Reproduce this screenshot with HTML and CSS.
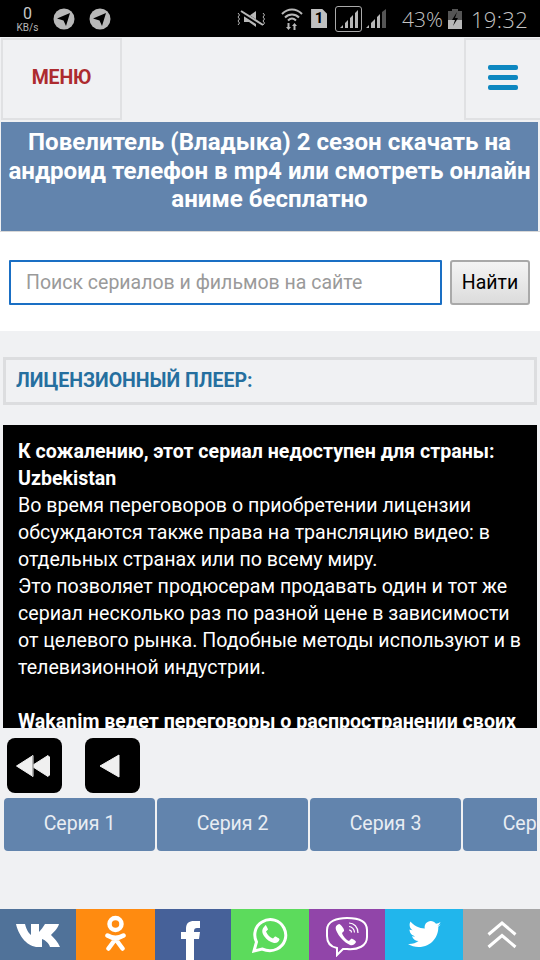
FILE: index.html
```html
<!DOCTYPE html>
<html lang="ru">
<head>
    <meta charset="UTF-8">
    <meta name="viewport" content="width=device-width, initial-scale=1.0">
    <title>Повелитель (Владыка) 2 сезон</title>
    <link rel="stylesheet" href="styles.css">
</head>
<body>
    <div class="status-bar">
        <div class="net-speed"><span class="net-num">0</span><span class="net-unit">KB/s</span></div>
        <svg class="tg" viewBox="0 0 22 22"><circle cx="11" cy="11" r="10.5" fill="#b8b8b8"/><path d="M4 10.5 17 5 13 18 10.5 12.5z" fill="#000"/></svg>
        <svg class="tg" viewBox="0 0 22 22"><circle cx="11" cy="11" r="10.5" fill="#b8b8b8"/><path d="M4 10.5 17 5 13 18 10.5 12.5z" fill="#000"/></svg>
        <div class="status-right">
            <svg class="st-mute" viewBox="0 0 30 18"><path d="M8 6h5l7-5v16l-7-5H8z" fill="#b8b8b8"/><path d="M5 2 27 16" stroke="#000" stroke-width="4"/><path d="M5 1 27 15" stroke="#b8b8b8" stroke-width="2"/><path d="M2 3l1.500 2-1.500 2 1.500 2-1.500 2 1.500 2-1.500 2M27 3l1.500 2-1.500 2 1.500 2-1.500 2 1.500 2-1.500 2" fill="none" stroke="#b8b8b8" stroke-width="1"/></svg>
            <svg class="st-wifi" viewBox="0 0 22 24"><path d="M1 7C7 1 15 1 21 7M4 10.500C8 6.500 14 6.500 18 10.500M7 13.500C9.500 11 12.500 11 15 13.500" fill="none" stroke="#b8b8b8" stroke-width="2"/><path d="M8.500 16v4H7l2.500 3 2.500-3h-1.500v-4zM14.500 23v-4H13l2.500-3 2.500 3h-1.500v4z" fill="#b8b8b8" transform="translate(-2 0)"/></svg>
            <div class="st-sim">1</div>
            <div class="st-signal-box">
                <svg class="st-signal" viewBox="0 0 18 18"><path d="M0 18l3-3v3zM5 18v-5l3-3v8zM10 18V8l3-3v13zM15 18V3l3-3v18z" fill="#b8b8b8"/></svg>
            </div>
            <svg class="st-signal2" viewBox="0 0 20 19"><path d="M0 19l3-3v3zM5 19v-5l4-4v9zM11 19V8l3-3v14z" fill="#b8b8b8"/><path d="M16 19V3l4-3v19z" fill="#555"/></svg>
            <span class="st-batt-text">43%</span>
            <svg class="st-batt" viewBox="0 0 14 20"><path d="M4 0h6v2h4v18H0V2h4z" fill="#555"/><path d="M0 11h14v9H0z" fill="#b8b8b8"/><path d="M9 3 4 11h3l-2 6 5-8H7z" fill="#000"/></svg>
            <span class="st-time">19:32</span>
        </div>
    </div>

    <div class="top-nav">
        <div class="menu-btn">МЕНЮ</div>
        <div class="burger-btn">
            <span class="burger-line"></span>
            <span class="burger-line"></span>
            <span class="burger-line"></span>
        </div>
    </div>

    <h1 class="page-title">Повелитель (Владыка) 2 сезон скачать на андроид телефон в mp4 или смотреть онлайн аниме бесплатно</h1>

    <div class="search-wrap">
        <input class="search-input" type="text" placeholder="Поиск сериалов и фильмов на сайте">
        <button class="search-btn" type="button">Найти</button>
    </div>

    <h2 class="player-head">ЛИЦЕНЗИОННЫЙ ПЛЕЕР:</h2>

    <div class="player-box">
        <strong>К сожалению, этот сериал недоступен для страны: Uzbekistan</strong><br>
        Во время переговоров о приобретении лицензии обсуждаются также права на трансляцию видео: в отдельных странах или по всему миру.<br>
        Это позволяет продюсерам продавать один и тот же сериал несколько раз по разной цене в зависимости от целевого рынка. Подобные методы используют и в телевизионной индустрии.<br>
        <br>
        <strong>Wakanim ведет переговоры о распространении своих</strong>
    </div>

    <div class="arrows">
        <div class="arrow-btn">
            <svg viewBox="0 0 36 24" class="arrow-icon"><path d="M1.500 12 18 1.500v21zM16.500 12 33 1.500 34.500 3v18L33 22.500z" fill="#f0f0f0" stroke="#f0f0f0" stroke-linejoin="round"/><path d="M18 2v20" stroke="#777" stroke-width="1"/></svg>
        </div>
        <div class="arrow-btn">
            <svg viewBox="0 0 22 24" class="arrow-icon-one"><path d="M1 12 20 1v22z" fill="#f0f0f0" stroke="#f0f0f0" stroke-linejoin="round"/></svg>
        </div>
    </div>

    <div class="series-row">
        <div class="series-btn">Серия 1</div>
        <div class="series-btn">Серия 2</div>
        <div class="series-btn">Серия 3</div>
        <div class="series-btn">Серия 4</div>
    </div>

    <div class="share-bar">
        <div class="share-item vk">
            <svg viewBox="0 0 44 24" class="ic-vk"><path d="M0 1h9c1 4 3 9 6 11V1h8v8c2-2 4-5 6-8h14c-1 4-5 8-8 11 3 3 7 7 9 12H34c-1-4-5-7-8-8v8h-4C12 24 3 14 0 1z" fill="#fff"/></svg>
        </div>
        <div class="share-item ok">
            <svg viewBox="0 0 21 37" class="ic-ok"><circle cx="10.500" cy="9" r="6" fill="none" stroke="#fff" stroke-width="4.500"/><path d="M2.500 20.500c5 3 11 3 16 0M10.500 24 3.500 33.500M10.500 24l7 9.500" fill="none" stroke="#fff" stroke-width="4.500" stroke-linecap="round"/></svg>
        </div>
        <div class="share-item fb">
            <svg viewBox="0 0 19 39" class="ic-fb"><path d="M5 39V18H0v-7h5V8c0-6 3-8 8-8h6v7h-3c-2 0-3 1-3 3v1h6l-1 7h-5v21z" fill="#fff"/></svg>
        </div>
        <div class="share-item wa">
            <svg viewBox="0 0 36 36" class="ic-wa"><path d="M2 34 4.500 25C1 18 3 9 10 5c8-5 18-2 22 6 4 8 1 17-7 21-5 2.500-10 2-15 0z" fill="none" stroke="#fff" stroke-width="3"/><path d="M12 10c-2 2-2.500 5 0 9 3 4 6 6 10 7 3 .5 5-1.500 5.500-3.500.1-1-3.500-3-4.500-3l-2 2c-3-1-5.500-3.500-7-7l2-2c0-1-2-4.500-2.500-4.500z" fill="#fff"/></svg>
        </div>
        <div class="share-item vb">
            <svg viewBox="0 0 42 40" class="ic-vb"><path d="M21 1c10 0 20 2 20 12v7c0 9-9 13-20 12h-4l-6 6v-7C5 30 1 26 1 19v-6C1 4 11 1 21 1z" fill="none" stroke="#fff" stroke-width="2"/><path d="M13 7c-3 1-4 3-3 6 3 7 8 12 14 15 3 1 5-1 6-3 0-1-4-4-5-3l-2 2c-3-1-6-5-7-8l2-2c1-1-3-7-5-7z" fill="#fff"/><path d="M23 6c5 0 9 4 9 10M23 9.500c3 0 5.500 3 5.500 6M23 13c1.500 0 2.500 1 2.500 2.500" fill="none" stroke="#fff" stroke-width="1.200"/></svg>
        </div>
        <div class="share-item tw">
            <svg viewBox="0 0 33 26" class="ic-tw"><path d="M33 3c-1 1-2 1.500-3.500 1.800C31 4 32 2.500 32.500 1c-1.500 1-3 1.500-4.500 1.800C26.500 1 24.800 0 22.800 0c-4 0-6.900 3.700-6 7.600C11 7.300 5.800 4.500 2.500.5.800 3.500 1.600 7.300 4.600 9.300 3.500 9.300 2.500 9 1.500 8.500c0 3.300 2.300 6 5.500 6.700-1 .3-2 .3-3 .1 1 2.800 3.500 4.700 6.500 4.800C7.700 22.300 4 23.300 0 23c3.100 2 6.700 3 10.600 3C23.500 26 30.700 15.300 30.300 5.700 31.400 4.900 32.300 4 33 3z" fill="#fff"/></svg>
        </div>
        <div class="share-item up">
            <svg viewBox="0 0 30 28" class="ic-up"><path d="M1.500 13.500 15 2l13.500 11.500M1.500 26 15 14.500 28.500 26" fill="none" stroke="#fff" stroke-width="3"/></svg>
        </div>
    </div>
</body>
</html>
```

FILE: styles.css
```css
* {
    box-sizing: border-box;
}
html, body {
    margin: 0;
    padding: 0;
}
body {
    width: 540px;
    height: 960px;
    overflow: hidden;
    background-color: #f0f1f3;
    font-family: Roboto, "Liberation Sans", sans-serif;
    display: flex;
    flex-direction: column;
}

/* status bar */
.status-bar {
    height: 37px;
    flex: none;
    background: #000;
    color: #b8b8b8;
    display: flex;
    align-items: center;
    padding-left: 16px;
}
.net-speed {
    width: 23px;
    display: flex;
    flex-direction: column;
    align-items: center;
    margin-right: 14px;
    padding-top: 1px;
}
.net-num {
    font-size: 16px;
    line-height: 16px;
    color: #c8c8c8;
}
.net-unit {
    font-size: 10px;
    line-height: 11px;
}
.tg {
    width: 22px;
    height: 22px;
    margin-right: 14px;
}
.status-right {
    margin-left: auto;
    display: flex;
    align-items: center;
    padding-right: 12px;
}
.st-mute {
    width: 30px;
    height: 18px;
    margin-right: 15px;
}
.st-wifi {
    width: 22px;
    height: 24px;
    margin-right: 8px;
}
.st-sim {
    width: 16px;
    height: 19px;
    background: #c0c0c0;
    color: #000;
    font-size: 15px;
    font-weight: 700;
    line-height: 19px;
    text-align: center;
    margin-right: 8px;
    clip-path: polygon(0 0, 70% 0, 100% 25%, 100% 100%, 0 100%);
}
.st-signal-box {
    width: 27px;
    height: 26px;
    border: 1px solid #aaa;
    border-radius: 3px;
    padding: 3px 2px 2px 4px;
    margin-right: 4px;
}
.st-signal {
    display: block;
    width: 18px;
    height: 18px;
}
.st-signal2 {
    width: 20px;
    height: 19px;
    margin-right: 16px;
}
.st-batt-text {
    font-family: "Open Sans", sans-serif;
    font-weight: 300;
    font-size: 21px;
    margin-right: 5px;
    color: #c4c4c4;
}
.st-batt {
    width: 14px;
    height: 20px;
    margin-right: 9px;
}
.st-time {
    font-family: "Open Sans", sans-serif;
    font-weight: 300;
    font-size: 22px;
    letter-spacing: 0.3px;
    color: #c4c4c4;
}

/* top nav */
.top-nav {
    flex: none;
    height: 85px;
    padding: 1px 0 2px 1px;
    display: flex;
    justify-content: space-between;
}
.menu-btn {
    width: 121px;
    border: 2px solid #e0e1e3;
    padding-bottom: 4px;
    display: flex;
    align-items: center;
    justify-content: center;
    color: #ad2b2f;
    font-size: 19.5px;
    font-weight: 700;
    letter-spacing: -0.2px;
}
.burger-btn {
    width: 76px;
    border: 2px solid #e0e1e3;
    border-right: none;
    padding-bottom: 4px;
    display: flex;
    flex-direction: column;
    align-items: center;
    justify-content: center;
    gap: 5px;
}
.burger-line {
    width: 30px;
    height: 5px;
    border-radius: 2px;
    background: #0d87c0;
}

.page-title {
    flex: none;
    margin: 0 2px 0 1px;
    height: 109px;
    background: #6284ad;
    color: #fff;
    font-size: 24.1px;
    font-weight: 700;
    line-height: 28.5px;
    text-align: center;
    padding-top: 6px;
}

.search-wrap {
    flex: none;
    height: 100px;
    background: #fff;
    border-top: 1px solid #d8d8d8;
    padding: 28px 10px 0 9px;
    display: flex;
    align-items: flex-start;
    gap: 8px;
}
.search-input {
    flex: 1;
    min-width: 0;
    height: 45px;
    border: 2px solid #1a6fc4;
    border-radius: 1px;
    padding: 0 15px;
    font-family: Roboto, sans-serif;
    font-size: 19.5px;
    outline: none;
}
.search-input::placeholder {
    color: #9a9a9a;
    opacity: 1;
}
.search-btn {
    width: 80px;
    height: 45px;
    border: 2px solid #a9a9a9;
    border-radius: 3px;
    background: linear-gradient(#f4f4f4, #dcdcdc);
    color: #000;
    font-family: Roboto, sans-serif;
    font-size: 19.5px;
    padding: 0;
}

.player-head {
    flex: none;
    margin: 26px 3px 0 3px;
    height: 48px;
    border: 3px solid #dcdddf;
    color: #256f9f;
    font-size: 19.5px;
    font-weight: 700;
    line-height: 42px;
    padding-left: 10px;
}

.player-box {
    flex: none;
    margin: 20px 3px 0 3px;
    height: 303px;
    overflow: hidden;
    background: #000;
    color: #fff;
    font-size: 19.6px;
    line-height: 27px;
    padding: 13px 15px 0 15px;
}

.arrows {
    flex: none;
    display: flex;
    gap: 23px;
    padding: 10px 0 0 7px;
}
.arrow-btn {
    width: 55px;
    height: 55px;
    background: #000;
    border-radius: 8px;
    display: flex;
    align-items: center;
    justify-content: center;
}
.arrow-icon {
    width: 36px;
    height: 24px;
    margin-right: 4px;
}
.arrow-icon-one {
    width: 22px;
    height: 24px;
    margin-right: 5px;
}

.series-row {
    flex: none;
    margin: 5px 3px 0 4px;
    display: flex;
    gap: 2px;
    overflow: hidden;
}
.series-btn {
    flex: none;
    width: 151px;
    height: 53px;
    padding-bottom: 3px;
    background: #6284ad;
    border-radius: 4px;
    color: #e8edf3;
    font-size: 19.5px;
    display: flex;
    align-items: center;
    justify-content: center;
}

/* share bar */
.share-bar {
    flex: none;
    margin-top: auto;
    height: 51px;
    display: flex;
    overflow: hidden;
}
.share-item {
    flex: none;
    display: flex;
    justify-content: center;
    align-items: flex-start;
}
.vk { width: 76px; background: #507299; }
.ok { width: 79px; background: #ff8b10; }
.fb { width: 76px; background: #466199; }
.wa { width: 78px; background: #5cdb5c; }
.vb { width: 76px; background: #9145a9; }
.tw { width: 78px; background: #21b6ec; }
.up { width: 77px; background: #a6a6a6; }
.ic-vk { width: 44px; height: 24px; margin-top: 14px; }
.ic-ok { width: 21px; height: 37px; margin-top: 6px; }
.ic-fb { width: 19px; height: 39px; margin-top: 12px; margin-right: 5px; }
.ic-wa { width: 36px; height: 36px; margin-top: 8px; }
.ic-vb { width: 42px; height: 40px; margin-top: 8px; }
.ic-tw { width: 33px; height: 26px; margin-top: 12px; }
.ic-up { width: 30px; height: 28px; margin-top: 12px; }
```
